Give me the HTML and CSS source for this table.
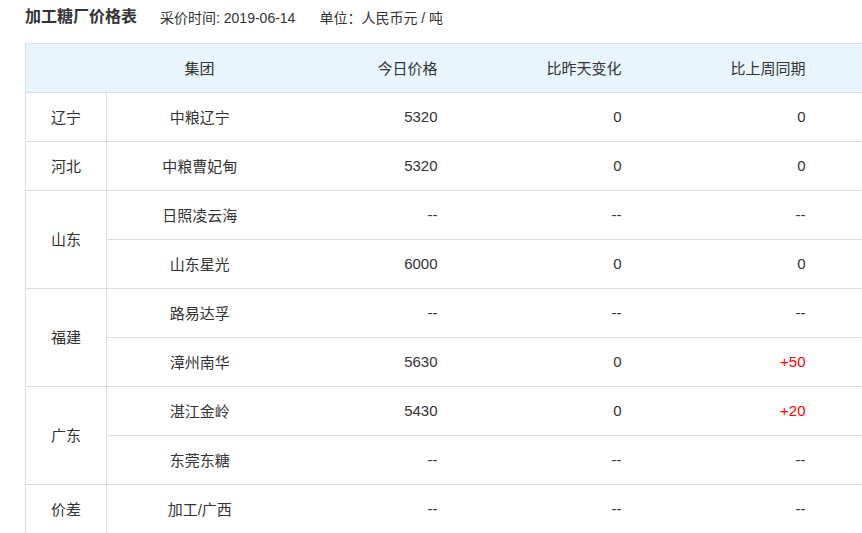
FILE: index.html
```html
<!DOCTYPE html>
<html lang="zh">
<head>
<meta charset="utf-8">
<title>加工糖厂价格表</title>
<link rel="stylesheet" href="styles.css">
</head>
<body>
<div class="page">
  <div class="head">
    <h1 class="title">加工糖厂价格表</h1>
    <span class="meta">采价时间: 2019-06-14</span>
    <span class="meta">单位：人民币元 / 吨</span>
  </div>
  <table class="price">
    <colgroup>
      <col class="c1"><col class="c2"><col class="c3"><col class="c4"><col class="c5">
    </colgroup>
    <thead>
      <tr>
        <th class="prov"></th>
        <th class="name">集团</th>
        <th class="num">今日价格</th>
        <th class="num">比昨天变化</th>
        <th class="num last">比上周同期</th>
      </tr>
    </thead>
    <tbody>
      <tr><td class="prov">辽宁</td><td class="name">中粮辽宁</td><td class="num">5320</td><td class="num">0</td><td class="num last">0</td></tr>
      <tr><td class="prov">河北</td><td class="name">中粮曹妃甸</td><td class="num">5320</td><td class="num">0</td><td class="num last">0</td></tr>
      <tr><td class="prov" rowspan="2">山东</td><td class="name">日照凌云海</td><td class="num">--</td><td class="num">--</td><td class="num last">--</td></tr>
      <tr><td class="name">山东星光</td><td class="num">6000</td><td class="num">0</td><td class="num last">0</td></tr>
      <tr><td class="prov" rowspan="2">福建</td><td class="name">路易达孚</td><td class="num">--</td><td class="num">--</td><td class="num last">--</td></tr>
      <tr><td class="name">漳州南华</td><td class="num">5630</td><td class="num">0</td><td class="num last up">+50</td></tr>
      <tr><td class="prov" rowspan="2">广东</td><td class="name">湛江金岭</td><td class="num">5430</td><td class="num">0</td><td class="num last up">+20</td></tr>
      <tr><td class="name">东莞东糖</td><td class="num">--</td><td class="num">--</td><td class="num last">--</td></tr>
      <tr><td class="prov">价差</td><td class="name">加工/广西</td><td class="num">--</td><td class="num">--</td><td class="num last">--</td></tr>
    </tbody>
  </table>
</div>
</body>
</html>
```

FILE: styles.css
```css
html, body {
  margin: 0;
  padding: 0;
  background: #fff;
  overflow: hidden;
}
body {
  font-family: "Liberation Sans", "Noto Sans CJK SC", sans-serif;
  color: #333;
  font-size: 14px;
}
.page {
  padding: 6px 0 0 25px;
}
.head {
  display: flex;
  align-items: center;
  height: 22px;
}
.title {
  margin: 0 23px 0 0;
  font-size: 16px;
  font-weight: bold;
  line-height: 22px;
  color: #333;
}
.meta {
  font-size: 14px;
  margin-right: 24px;
  color: #333;
}
.price {
  margin-top: 15px;
  border-collapse: collapse;
  table-layout: fixed;
  width: 837px;
  font-size: 15px;
}
.c1 { width: 81px; }
.c2 { width: 186px; }
.c3 { width: 165px; }
.c4 { width: 184px; }
.c5 { width: 221px; }
.price th,
.price td {
  height: 46px;
  padding: 0 20px 2px 0;
  border-top: 1px solid #ddd;
  border-bottom: 1px solid #ddd;
  font-weight: normal;
  vertical-align: middle;
}
.price thead th {
  background: #e8f5fd;
}
.price .prov {
  text-align: center;
  padding: 0 0 2px 0;
  border-left: 1px solid #ddd;
  border-right: 1px solid #ddd;
}
.price thead th.prov {
  border-right: none;
}
.price .name {
  text-align: center;
  padding: 0 0 2px 0;
}
.price .num {
  text-align: right;
}
.price .last {
  padding-right: 57px;
}
.price .up {
  color: #f00;
}
```
